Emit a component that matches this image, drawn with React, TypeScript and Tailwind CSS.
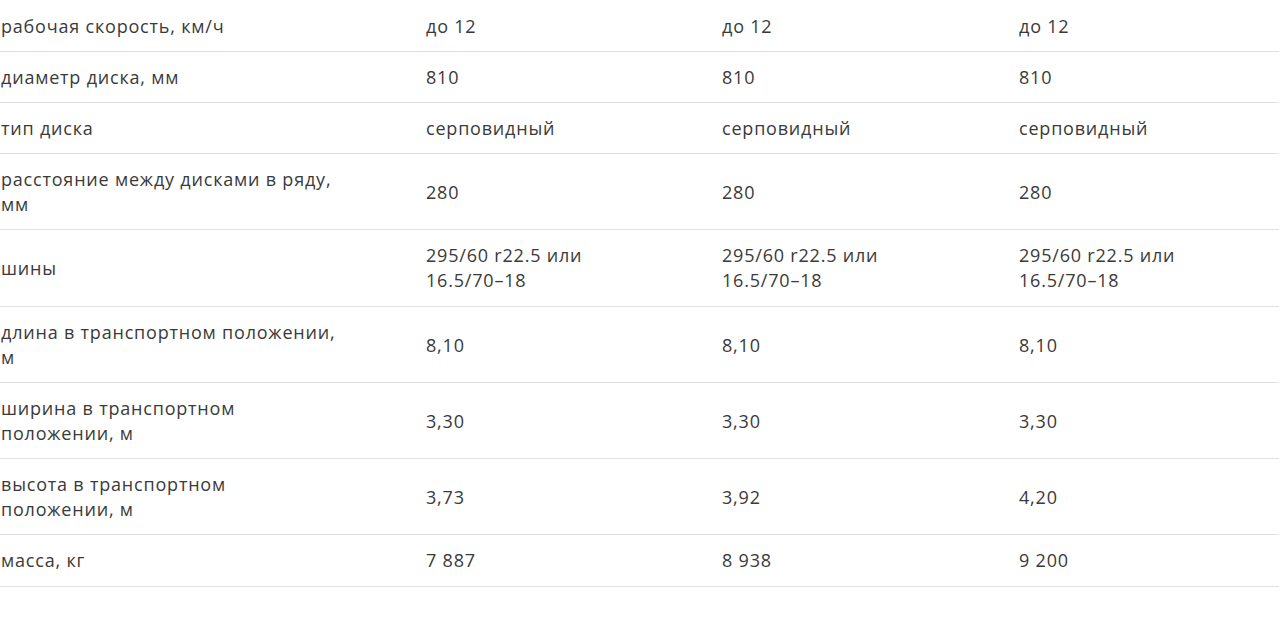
import React from 'react';

type Row = { label: React.ReactNode; values: React.ReactNode[]; tall?: boolean };

const tires = (
    <>
        295/60 r22.5 или
        <br />
        16.5/70–18
    </>
);

const rows: Row[] = [
    { label: 'рабочая скорость, км/ч', values: ['до 12', 'до 12', 'до 12'] },
    { label: 'диаметр диска, мм', values: ['810', '810', '810'] },
    { label: 'тип диска', values: ['серповидный', 'серповидный', 'серповидный'] },
    {
        label: (
            <>
                расстояние между дисками в ряду,
                <br />
                мм
            </>
        ),
        values: ['280', '280', '280'],
    },
    { label: 'шины', values: [tires, tires, tires], tall: true },
    {
        label: (
            <>
                длина в транспортном положении,
                <br />м
            </>
        ),
        values: ['8,10', '8,10', '8,10'],
    },
    {
        label: (
            <>
                ширина в транспортном
                <br />
                положении, м
            </>
        ),
        values: ['3,30', '3,30', '3,30'],
    },
    {
        label: (
            <>
                высота в транспортном
                <br />
                положении, м
            </>
        ),
        values: ['3,73', '3,92', '4,20'],
    },
    { label: 'масса, кг', values: ['7 887', '8 938', '9 200'], tall: true },
];

const App: React.FC = () => {
    return (
        <div
            className="w-[1286px] h-[633px] bg-white text-[#3a3a3a] text-[18px] leading-[25px] tracking-[0.8px]"
            style={{ fontFamily: '"Open Sans", "Noto Sans", sans-serif' }}
        >
            <div className="w-[1279px] pt-[1px]">
                {rows.map((row, i) => (
                    <div
                        key={i}
                        className={`grid grid-cols-[425px_296px_297px_1fr] items-center border-b border-[#e0e0e0] pt-[13px] ${
                            row.tall ? 'pb-[13px]' : 'pb-[12px]'
                        }`}
                    >
                        <div className="pl-[1px]">{row.label}</div>
                        {row.values.map((v, j) => (
                            <div key={j} className="pl-[1px]">
                                {v}
                            </div>
                        ))}
                    </div>
                ))}
            </div>
        </div>
    );
};

export default App;
